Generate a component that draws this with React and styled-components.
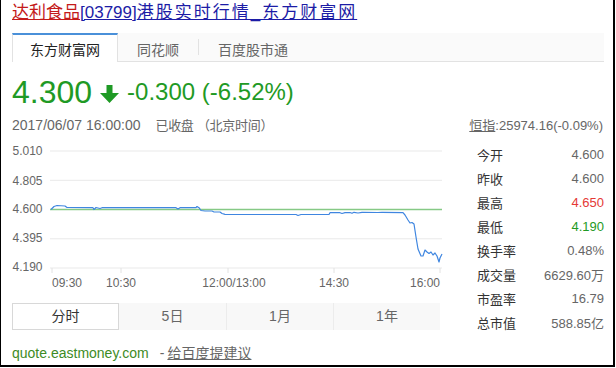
import React from "react";
import styled, { createGlobalStyle } from "styled-components";

const GlobalStyle = createGlobalStyle`
  html, body {
    margin: 0;
    padding: 0;
    background: #fff;
  }
  body {
    font-family: "Liberation Sans", Arial, "Noto Sans CJK SC", sans-serif;
  }
`;

const Page = styled.div`
  width: 615px;
  height: 367px;
  box-sizing: border-box;
  border-left: 1px solid #000;
  border-right: 2px solid #000;
  border-bottom: 2px solid #000;
  padding: 3px 9px 0 11px;
  overflow: hidden;
`;

const Title = styled.div`
  height: 20px;
  line-height: 20px;
  font-size: 17px;
  white-space: nowrap;
`;

const TitleLink = styled.a`
  color: ${(p) => (p.$red ? "#c41a1a" : "#1c1ca6")};
  text-decoration: underline;
  cursor: pointer;
`;

const Wide = styled.span`
  letter-spacing: 2px;
`;

const TabBar = styled.div`
  margin-top: 10px;
  height: 28px;
  display: flex;
  background: #fafafa;
  border-bottom: 1px solid #e2e2e2;
`;

const Tab = styled.div`
  box-sizing: border-box;
  height: ${(p) => (p.$active ? "29px" : "28px")};
  padding: ${(p) => (p.$active ? "2px" : "4px")} ${(p) => p.$pad}px 0;
  font-size: 14px;
  line-height: 24px;
  color: ${(p) => (p.$active ? "#222" : "#666")};
  background: ${(p) => (p.$active ? "#fff" : "transparent")};
  border-top: ${(p) => (p.$active ? "2px solid #4a90d9" : "none")};
  border-left: ${(p) => (p.$active ? "1px solid #e2e2e2" : "none")};
  border-right: ${(p) => (p.$active ? "1px solid #e2e2e2" : "none")};
  font-family: "Noto Sans CJK SC", sans-serif;
`;

const TabDivider = styled.span`
  width: 1px;
  margin: 6px 0;
  background: #e2e2e2;
`;

const PriceRow = styled.div`
  margin-top: 14px;
  height: 32px;
  display: flex;
  align-items: center;
  color: #1f9a25;
`;

const Price = styled.span`
  font-size: 32px;
  line-height: 32px;
`;

const Change = styled.span`
  font-size: 24px;
  line-height: 32px;
  margin-left: 8px;
`;

const ArrowIcon = styled.svg`
  margin-left: 8px;
  margin-top: 4px;
`;

const MetaRow = styled.div`
  margin-top: 8px;
  height: 17px;
  display: flex;
  justify-content: space-between;
  align-items: center;
  color: #666;
  white-space: nowrap;
`;

const DateText = styled.span`
  font-size: 14px;
`;

const Status = styled.span`
  font-size: 13px;
  margin-left: 15px;
  letter-spacing: -0.3px;
`;

const IndexText = styled.span`
  font-size: 13px;
  margin-right: 1px;
`;

const IndexLink = styled.a`
  color: #666;
  text-decoration: underline;
`;

const Body = styled.div`
  margin-top: 8px;
  display: flex;
`;

const LeftCol = styled.div`
  width: 432px;
`;

const Chart = styled.svg`
  display: block;
`;

const Periods = styled.div`
  margin-top: 12px;
  width: 428px;
  height: 27px;
  display: grid;
  grid-template-columns: repeat(4, 1fr);
  background: #f8f8f8;
`;

const Period = styled.div`
  box-sizing: border-box;
  text-align: center;
  font-size: 14px;
  line-height: ${(p) => (p.$active ? "25px" : "27px")};
  color: ${(p) => (p.$active ? "#333" : "#666")};
  background: ${(p) => (p.$active ? "#fff" : "transparent")};
  border: ${(p) => (p.$active ? "1px solid #d8d8d8" : "none")};
  border-left: ${(p) => (p.$active ? "1px solid #d8d8d8" : p.$first ? "none" : "1px solid #ececec")};
`;

const Stats = styled.div`
  margin-left: auto;
  width: 127px;
  margin-top: 1px;
`;

const StatRow = styled.div`
  height: 24px;
  display: flex;
  justify-content: space-between;
  align-items: center;
  font-size: 13px;
`;

const StatLabel = styled.span`
  color: #333;
  font-family: "Noto Sans CJK SC", sans-serif;
`;

const StatValue = styled.span`
  color: ${(p) => p.$color || "#666"};
`;

const Footer = styled.div`
  margin-top: 11px;
  height: 16px;
  line-height: 16px;
  font-size: 14px;
  color: #666;
  white-space: nowrap;
`;

const Url = styled.span`
  color: #3d8b25;
  margin-right: 11px;
`;

const Feedback = styled.a`
  color: #666;
  text-decoration: underline;
  margin-left: 3px;
`;

const stats = [
  ["今开", "4.600"],
  ["昨收", "4.600"],
  ["最高", "4.650", "#e53935"],
  ["最低", "4.190", "#1f9a25"],
  ["换手率", "0.48%"],
  ["成交量", "6629.60万"],
  ["市盈率", "16.79"],
  ["总市值", "588.85亿"],
];

const line = [
  [51, 208.5], [54, 205.5], [57, 204.5], [65, 205], [67, 206.5], [93, 206.7],
  [94, 208.5], [96, 206.5], [100, 207.5], [102, 206.7], [176, 206.7], [178, 208],
  [180, 206.7], [196, 206.7], [197, 205.5], [199, 206.7], [201, 209.5], [205, 210],
  [212, 210], [214, 211], [220, 211], [222, 212.5], [225, 213.3], [231, 213.5],
  [296, 213.5], [298, 214.5], [301, 213.5], [329, 213.5], [330, 211.7], [340, 211.7],
  [342, 212.5], [345, 211.7], [350, 211.5], [352, 212.3], [354, 211.3], [358, 212],
  [362, 211.3], [378, 211.5], [382, 211.3], [403, 211.7], [405, 214], [408, 219],
  [410, 222], [412, 221.5], [414, 223], [416, 236], [418, 248], [421, 255],
  [423, 255], [425, 249], [427, 251], [429, 252.5], [431, 251], [433, 254],
  [435, 252], [437, 255], [439, 261], [440, 257], [442, 253],
];

const yLabels = [
  ["5.010", 150],
  ["4.805", 179.3],
  ["4.600", 208],
  ["4.395", 237],
  ["4.190", 265.5],
];

const xLabels = [
  ["09:30", 52, "start"],
  ["10:30", 121, "middle"],
  ["12:00/13:00", 234, "middle"],
  ["14:30", 334, "middle"],
  ["16:00", 440, "end"],
];

const ticks = [52, 121, 228, 334, 440];

const IntradayChart = () => (
  <Chart width="432" height="150" viewBox="12 140 432 150">
    {[150, 179.3, 237.8, 267].map((y) => (
      <line key={y} x1="50" x2="442" y1={y} y2={y} stroke="#e9e9e9" strokeWidth="1" />
    ))}
    {ticks.map((x) => (
      <line key={x} x1={x} x2={x} y1="267" y2="272" stroke="#e2e2e2" strokeWidth="1" />
    ))}
    <line x1="50" x2="442" y1="208.5" y2="208.5" stroke="#86c986" strokeWidth="1.6" />
    <polyline
      points={line.map((p) => p.join(",")).join(" ")}
      fill="none"
      stroke="#3f86e0"
      strokeWidth="1.2"
      strokeLinejoin="round"
    />
    {yLabels.map(([t, y]) => (
      <text key={t} x="12.5" y={y + 4.3} fontSize="12" fill="#666" fontFamily="Liberation Sans, Arial, sans-serif">
        {t}
      </text>
    ))}
    {xLabels.map(([t, x, a]) => (
      <text key={t} x={x} y="286.3" fontSize="12" fill="#666" textAnchor={a} fontFamily="Liberation Sans, Arial, sans-serif">
        {t}
      </text>
    ))}
  </Chart>
);

export default function App() {
  return (
    <>
      <GlobalStyle />
      <Page>
        <Title>
          <TitleLink $red>达利食品</TitleLink>
          <TitleLink>
            [03799]<Wide>港股实时行情_东方财富网</Wide>
          </TitleLink>
        </Title>

        <TabBar>
          <Tab $active $pad={17}>东方财富网</Tab>
          <Tab $pad={19}>同花顺</Tab>
          <TabDivider />
          <Tab $pad={19}>百度股市通</Tab>
        </TabBar>

        <PriceRow>
          <Price>4.300</Price>
          <ArrowIcon width="19" height="18" viewBox="0 0 19 18">
            <path d="M6.5 0 H12.5 V8 H19 L9.5 18 L0 8 H6.5 Z" fill="#1f9a25" />
          </ArrowIcon>
          <Change>-0.300 (-6.52%)</Change>
        </PriceRow>

        <MetaRow>
          <span>
            <DateText>2017/06/07 16:00:00</DateText>
            <Status>已收盘 （北京时间）</Status>
          </span>
          <IndexText>
            <IndexLink>恒指</IndexLink>:25974.16(-0.09%)
          </IndexText>
        </MetaRow>

        <Body>
          <LeftCol>
            <IntradayChart />
            <Periods>
              <Period $active>分时</Period>
              <Period $first>5日</Period>
              <Period>1月</Period>
              <Period>1年</Period>
            </Periods>
          </LeftCol>
          <Stats>
            {stats.map(([label, value, color]) => (
              <StatRow key={label}>
                <StatLabel>{label}</StatLabel>
                <StatValue $color={color}>{value}</StatValue>
              </StatRow>
            ))}
          </Stats>
        </Body>

        <Footer>
          <Url>quote.eastmoney.com</Url>-<Feedback>给百度提建议</Feedback>
        </Footer>
      </Page>
    </>
  );
}
